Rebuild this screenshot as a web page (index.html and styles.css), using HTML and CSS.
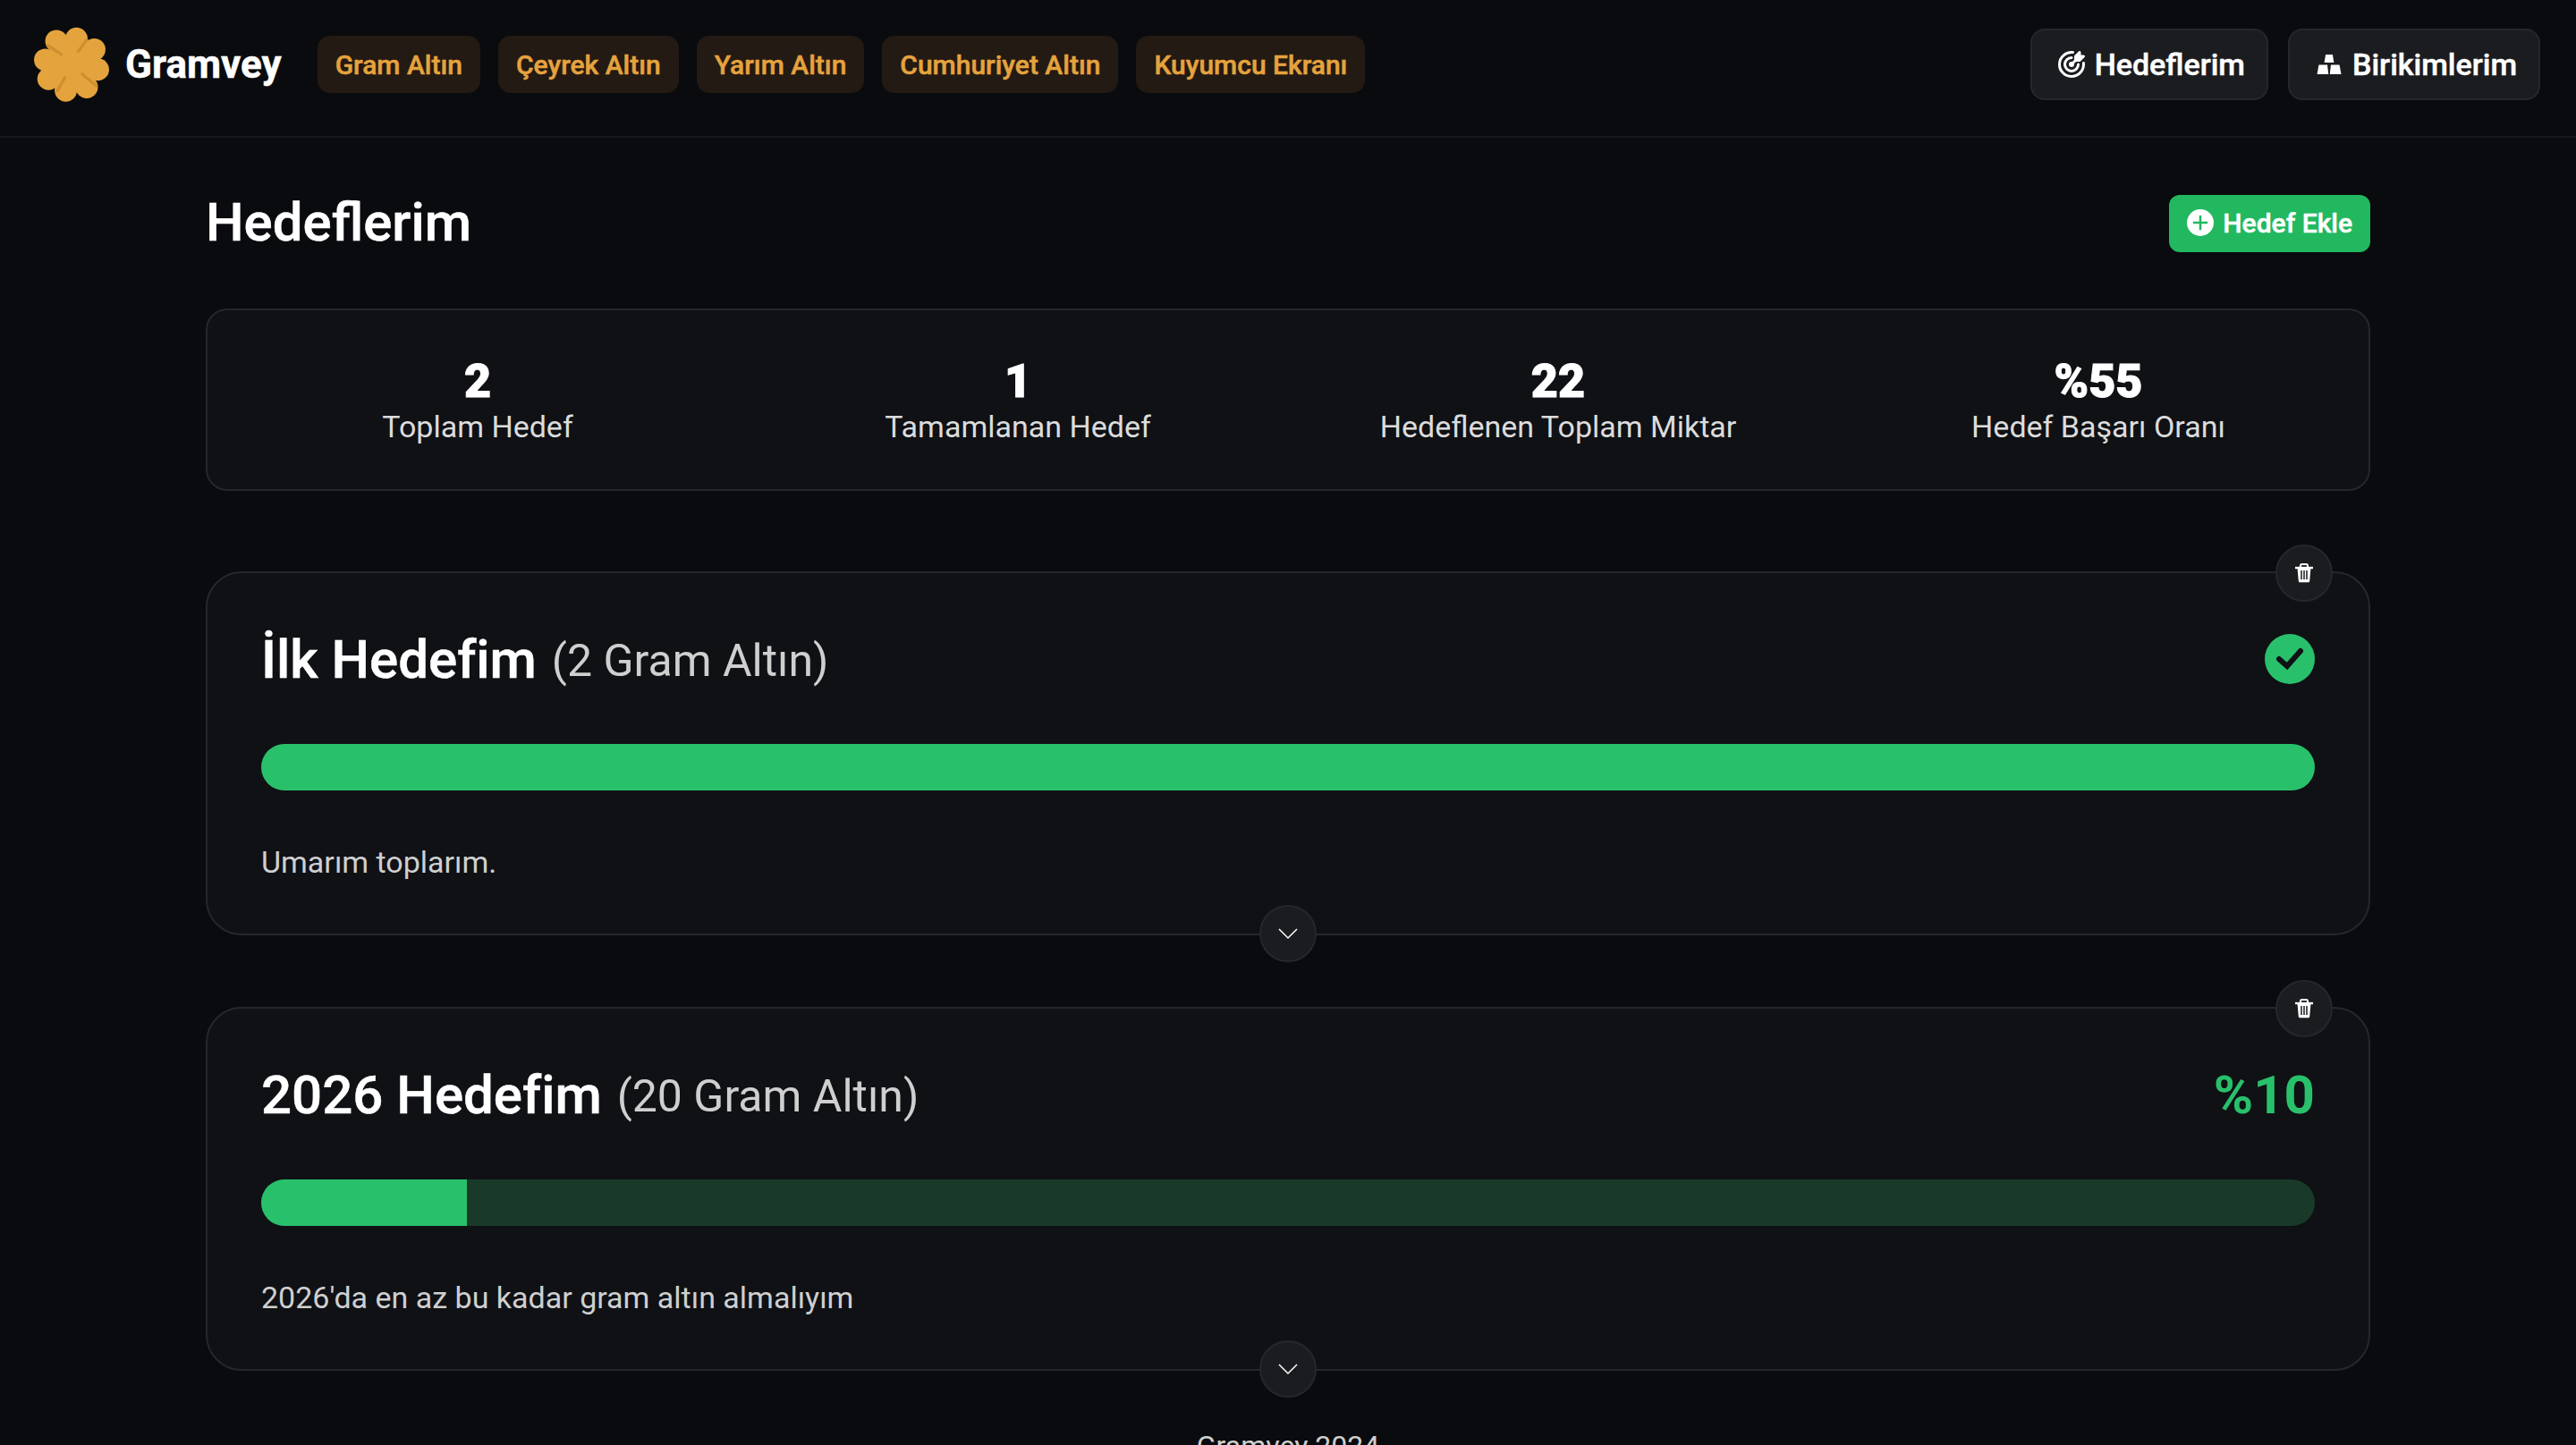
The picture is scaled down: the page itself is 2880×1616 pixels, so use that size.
FILE: index.html
```html
<!DOCTYPE html>
<html lang="tr">
  <head>
    <meta charset="utf-8">
    <title>Gramvey - Hedeflerim</title>
    <link rel="stylesheet" href="styles.css">
  </head>
  <body>
    <header class="topbar">
      <a class="brand">
        <svg class="brand-logo" viewBox="50 55 260 260">
          <g fill="#e5a33e">
            <circle cx="130" cy="108" r="37"/>
            <circle cx="196" cy="100" r="37"/>
            <circle cx="255" cy="136" r="37"/>
            <circle cx="267" cy="202" r="37"/>
            <circle cx="230" cy="260" r="37"/>
            <circle cx="161" cy="271" r="37"/>
            <circle cx="104" cy="233" r="37"/>
            <circle cx="93" cy="170" r="37"/>
            <circle cx="180" cy="185" r="80"/>
          </g>
          <g stroke="#cf8f2c" stroke-width="10" stroke-linecap="round">
            <path d="M102 122 L146 152"/>
            <path d="M202 142 L230 104"/>
            <path d="M215 217 L262 256"/>
            <path d="M133 272 L158 229"/>
          </g>
        </svg>
        <span class="brand-name">Gramvey</span>
      </a>
      <nav class="market-nav">
        <a class="market-link">Gram Altın</a>
        <a class="market-link">Çeyrek Altın</a>
        <a class="market-link">Yarım Altın</a>
        <a class="market-link">Cumhuriyet Altın</a>
        <a class="market-link">Kuyumcu Ekranı</a>
      </nav>
      <div class="user-nav">
        <a class="user-link">
          <svg class="user-icon" viewBox="0 0 24 24" fill="none" stroke="currentColor" stroke-width="2" stroke-linecap="round" stroke-linejoin="round">
            <path d="M11 12a1 1 0 1 0 2 0a1 1 0 1 0 -2 0"/>
            <path d="M12 7a5 5 0 1 0 5 5"/>
            <path d="M13 3.055a9 9 0 1 0 7.941 7.945"/>
            <path d="M15 6v3h3l3 -3h-3v-3z" fill="currentColor"/>
            <path d="M15 9l-3 3"/>
          </svg>
          Hedeflerim
        </a>
        <a class="user-link">
          <svg class="user-icon" viewBox="0 0 24 24" fill="currentColor">
            <path d="M9.400 4.700h5.200l1 6h-7.200z"/>
            <path d="M4.300 12.400h6.400l.8 6.900H3z"/>
            <path d="M13.300 12.400h6.400l1.300 6.900h-8.500z"/>
          </svg>
          Birikimlerim
        </a>
      </div>
    </header>

    <main class="page">
      <div class="page-head">
        <h1 class="page-title">Hedeflerim</h1>
        <button class="add-btn">
          <svg class="add-icon" viewBox="0 0 24 24">
            <circle cx="12" cy="12" r="12" fill="#fff"/>
            <path d="M12 5.500v13M5.500 12h13" stroke="#22b860" stroke-width="2"/>
          </svg>
          Hedef Ekle
        </button>
      </div>

      <section class="stats">
        <div class="stat"><strong class="stat-value">2</strong><span class="stat-label">Toplam Hedef</span></div>
        <div class="stat"><strong class="stat-value">1</strong><span class="stat-label">Tamamlanan Hedef</span></div>
        <div class="stat"><strong class="stat-value">22</strong><span class="stat-label">Hedeflenen Toplam Miktar</span></div>
        <div class="stat"><strong class="stat-value">%55</strong><span class="stat-label">Hedef Başarı Oranı</span></div>
      </section>

      <section class="goals">
        <article class="goal">
          <button class="round-btn delete-btn">
            <svg class="round-icon" viewBox="0 0 24 24" fill="none" stroke="#fff" stroke-width="2">
              <path d="M2 6h20" stroke-width="2.400"/>
              <path d="M8 6V3.500A1.500 1.500 0 0 1 9.500 2h5A1.500 1.500 0 0 1 16 3.500V6"/>
              <path d="M4.500 6l1.300 15a1.500 1.500 0 0 0 1.500 1.200h9.400a1.500 1.500 0 0 0 1.500-1.200L19.500 6z" fill="#fff" stroke="none"/>
              <path d="M9 9v10M12 9v10M15 9v10" stroke="#1a1c20" stroke-width="1.500"/>
            </svg>
          </button>
          <div class="goal-head">
            <h2 class="goal-title">İlk Hedefim <span class="goal-amount">(2 Gram Altın)</span></h2>
            <svg class="goal-check" viewBox="0 0 56 56">
              <circle cx="28" cy="28" r="28" fill="#29c06b"/>
              <path d="M16 28 L25 36 L40 19" fill="none" stroke="#0f1115" stroke-width="6" stroke-linecap="round" stroke-linejoin="miter"/>
            </svg>
          </div>
          <div class="progress"><div class="progress-fill" style="width: 100%"></div></div>
          <p class="goal-note">Umarım toplarım.</p>
          <button class="round-btn expand-btn">
            <svg class="round-icon" viewBox="0 0 24 24" fill="none" stroke="#fff" stroke-width="1.500"><path d="M2 7l10 10 10-10"/></svg>
          </button>
        </article>

        <article class="goal">
          <button class="round-btn delete-btn">
            <svg class="round-icon" viewBox="0 0 24 24" fill="none" stroke="#fff" stroke-width="2">
              <path d="M2 6h20" stroke-width="2.400"/>
              <path d="M8 6V3.500A1.500 1.500 0 0 1 9.500 2h5A1.500 1.500 0 0 1 16 3.500V6"/>
              <path d="M4.500 6l1.300 15a1.500 1.500 0 0 0 1.500 1.200h9.400a1.500 1.500 0 0 0 1.500-1.200L19.500 6z" fill="#fff" stroke="none"/>
              <path d="M9 9v10M12 9v10M15 9v10" stroke="#1a1c20" stroke-width="1.500"/>
            </svg>
          </button>
          <div class="goal-head">
            <h2 class="goal-title">2026 Hedefim <span class="goal-amount">(20 Gram Altın)</span></h2>
            <span class="goal-percent">%10</span>
          </div>
          <div class="progress"><div class="progress-fill" style="width: 10%"></div></div>
          <p class="goal-note">2026'da en az bu kadar gram altın almalıyım</p>
          <button class="round-btn expand-btn">
            <svg class="round-icon" viewBox="0 0 24 24" fill="none" stroke="#fff" stroke-width="1.500"><path d="M2 7l10 10 10-10"/></svg>
          </button>
        </article>
      </section>

      <footer class="page-foot">Gramvey 2024</footer>
    </main>
  </body>
</html>
```

FILE: styles.css
```css
html { background: #0a0b0e; }
body { margin: 0; color: #fff; font-family: Roboto, "Liberation Sans", sans-serif; }

.topbar { display: flex; align-items: center; height: 144px; padding: 0 40px 8px 36px; border-bottom: 2px solid #16181c; }
.brand { display: flex; align-items: center; gap: 16px; margin-right: 40px; }
.brand-logo { width: 88px; height: 88px; }
.brand-name { font-size: 44px; font-weight: 700; -webkit-text-stroke: 0.5px; }

.market-nav { display: flex; gap: 20px; }
.market-link { display: flex; align-items: center; height: 64px; padding: 0 20px; border-radius: 14px; background: #231a13; color: #e5a33e; font-size: 30px; font-weight: 500; -webkit-text-stroke: 0.5px; }

.user-nav { display: flex; gap: 22px; margin-left: auto; }
.user-link { display: flex; align-items: center; gap: 8px; height: 80px; padding: 0 24px 0 26px; border: 2px solid #25272c; border-radius: 16px; background: #1a1c20; font-size: 34px; font-weight: 500; -webkit-text-stroke: 0.5px; box-sizing: border-box; }
.user-icon { width: 36px; height: 36px; }

.page { width: 2420px; margin: 0 auto; padding-top: 64px; }
.page-head { display: flex; align-items: center; justify-content: space-between; height: 64px; }
.page-title { margin: 0; padding-bottom: 3px; font-size: 60px; font-weight: 500; -webkit-text-stroke: 0.5px; }
.add-btn { display: flex; align-items: center; gap: 10px; height: 64px; padding: 0 20px 2px; border: 0; border-radius: 12px; background: #22b860; color: #fff; font-family: inherit; font-size: 30px; font-weight: 500; -webkit-text-stroke: 0.5px; }
.add-icon { width: 30px; height: 30px; }

.stats { display: grid; grid-template-columns: repeat(4, 1fr); margin-top: 63px; padding: 52px 0 48px; border: 2px solid #25272c; border-radius: 24px; background: #0f1115; }
.stat { display: flex; flex-direction: column; align-items: center; }
.stat-value { font-size: 52px; font-weight: 900; line-height: 56px; -webkit-text-stroke: 1px; }
.stat-label { font-size: 34px; line-height: 44px; color: #dcdcdc; }

.goals { display: flex; flex-direction: column; gap: 80px; margin-top: 90px; }
.goal { position: relative; padding: 61px 60px 55px; border: 2px solid #25272c; border-radius: 40px; background: #0f1115; }
.goal-head { display: flex; align-items: center; justify-content: space-between; height: 70px; }
.goal-title { margin: 0; font-size: 60px; font-weight: 500; -webkit-text-stroke: 0.5px; }
.goal-amount { margin-left: 2px; font-size: 50px; font-weight: 400; color: #cfcfcf; vertical-align: 2px; -webkit-text-stroke: 0; }
.goal-check { width: 56px; height: 56px; }
.goal-percent { font-size: 60px; font-weight: 700; color: #29c06b; }

.progress { height: 52px; margin-top: 60px; border-radius: 26px; background: #193a29; overflow: hidden; }
.progress-fill { height: 100%; background: #29c06b; }
.goal-note { margin: 55px 0 0; font-size: 34px; line-height: 50px; color: #cfcfcf; }

.round-btn { position: absolute; display: flex; align-items: center; justify-content: center; width: 64px; height: 64px; padding: 0; border: 2px solid #25272c; border-radius: 50%; background: #1a1c20; }
.round-icon { width: 24px; height: 24px; }
.delete-btn { top: -32px; right: 40px; }
.expand-btn { bottom: -32px; left: 50%; margin-left: -32px; }

.page-foot { margin-top: 62px; padding-bottom: 40px; font-size: 32px; line-height: 44px; text-align: center; color: #cfcfcf; }
```
